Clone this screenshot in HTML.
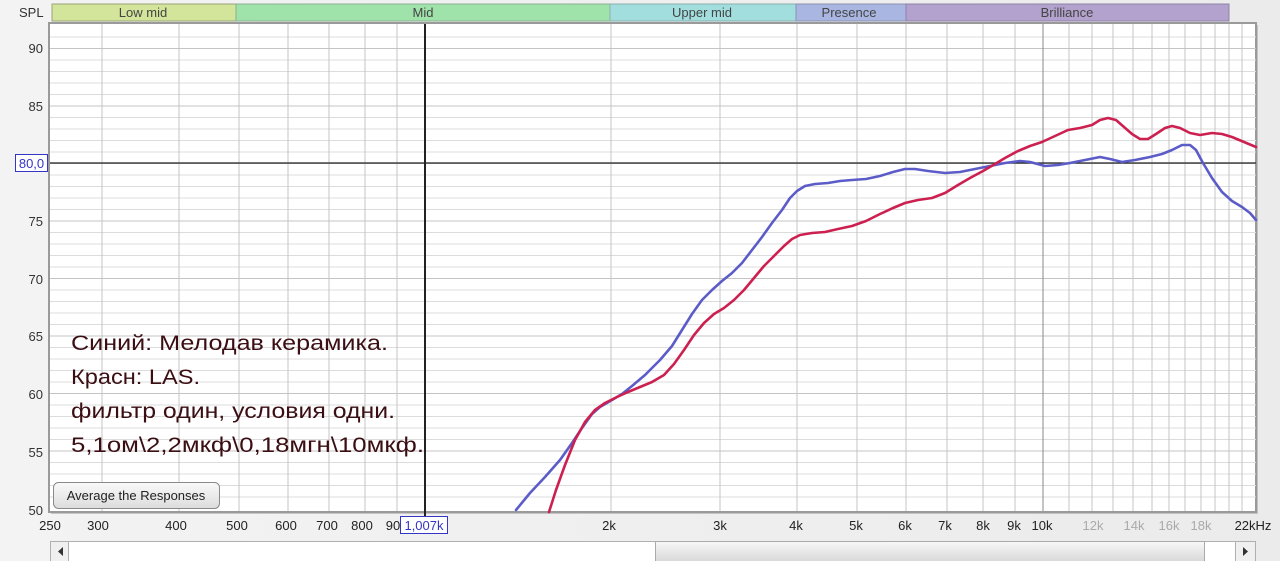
<!DOCTYPE html>
<html><head><meta charset="utf-8"><style>
html,body{margin:0;padding:0;width:1280px;height:561px;overflow:hidden;background:#efefef;}
svg{display:block}
</style></head><body>
<svg width="1280" height="561" viewBox="0 0 1280 561" xmlns="http://www.w3.org/2000/svg" font-family="Liberation Sans, sans-serif">
<defs>
<linearGradient id="bg" x1="0" y1="0" x2="1" y2="0"><stop offset="0" stop-color="#f3f3f3"/><stop offset="1" stop-color="#ebebeb"/></linearGradient>
<linearGradient id="sb" x1="0" y1="0" x2="0" y2="1"><stop offset="0" stop-color="#f8f8f8"/><stop offset="1" stop-color="#d8d8d8"/></linearGradient>
<linearGradient id="btn" x1="0" y1="0" x2="0" y2="1"><stop offset="0" stop-color="#fafafa"/><stop offset="1" stop-color="#dcdcdc"/></linearGradient>
</defs>
<rect width="1280" height="561" fill="url(#bg)"/>
<!-- bands -->
<g font-size="13" fill="#444" text-anchor="middle">
<rect x="52" y="4" width="184" height="17" fill="#d3e59b" stroke="#9aa47a"/><text x="143" y="17">Low mid</text>
<rect x="236" y="4" width="374" height="17" fill="#9fe3aa" stroke="#8ab092"/><text x="423" y="17">Mid</text>
<rect x="610" y="4" width="186" height="17" fill="#a2dede" stroke="#8ab0b0"/><text x="702" y="17">Upper mid</text>
<rect x="796" y="4" width="110" height="17" fill="#a9b6e2" stroke="#8a92b0"/><text x="849" y="17">Presence</text>
<rect x="906" y="4" width="323" height="17" fill="#b2a2cd" stroke="#8f82a6"/><text x="1067" y="17">Brilliance</text>
</g>
<text x="19" y="17" font-size="13" fill="#333">SPL</text>
<!-- plot -->
<rect x="51" y="25" width="1207" height="489" fill="#999" opacity="0.5"/>
<rect x="49" y="23" width="1207" height="489" fill="#fff" stroke="#9a9a9a" stroke-width="2"/>
<g stroke="#dcdcdc" stroke-width="1">
<path d="M50 37H1256M50 60H1256M50 71.5H1256M50 83H1256M50 94.5H1256M50 117.5H1256M50 129H1256M50 140.5H1256M50 152H1256M50 175H1256M50 186.5H1256M50 198H1256M50 209.5H1256M50 232.5H1256M50 244H1256M50 255.5H1256M50 267H1256M50 290H1256M50 301.5H1256M50 313H1256M50 324.5H1256M50 347.5H1256M50 359H1256M50 370.5H1256M50 382H1256M50 405H1256M50 416.5H1256M50 428H1256M50 439.5H1256M50 462.5H1256M50 474H1256M50 485.5H1256M50 497H1256"/>
</g>
<g stroke="#c4c4c4" stroke-width="1">
<path d="M50 48.5H1256M50 106H1256M50 163.5H1256M50 221H1256M50 278.5H1256M50 336H1256M50 393.5H1256M50 451H1256"/>
<path d="M102 24V511M179 24V511M239 24V511M288 24V511M329 24V511M365 24V511M397 24V511M611 24V511M720 24V511M797 24V511M857 24V511M906 24V511M947 24V511M983 24V511M1015 24V511M1069 24V511M1092 24V511M1113 24V511M1133 24V511M1152 24V511M1169 24V511M1185 24V511M1201 24V511M1215 24V511M1229 24V511M1242 24V511"/>
</g>
<path d="M1043 24V511" stroke="#888" stroke-width="1"/>
<path d="M50 163H1256" stroke="#222" stroke-width="1.3"/>
<path d="M425 24V516" stroke="#222" stroke-width="2"/>
<!-- curves -->
<g fill="none" stroke-width="2.6" stroke-linejoin="round" stroke-linecap="round">
<polyline stroke="#5c5cc8" points="516,510 530,493 545,477 560,460 572,443 582,428 592,414 600,407 612,400 622,394 632,386 645,375 660,360 672,346 682,330 692,314 702,300 712,290 722,281 732,273 742,263 752,250 762,237 772,223 782,210 790,198 797,191 805,186 815,184 828,183 840,181 852,180 866,179 880,176 893,172 905,169 915,169 928,171 945,173 960,172 975,169 990,166 1005,163 1020,161 1030,162 1045,166 1058,165 1070,163 1085,160 1100,157 1110,159 1122,162 1135,160 1150,157 1162,154 1172,150 1182,145 1190,145 1196,150 1203,163 1212,178 1222,192 1232,201 1242,207 1250,213 1256,220"/>
<polyline stroke="#cc2050" points="549,512 556,490 565,465 575,440 585,422 595,410 605,403 617,397 628,392 640,387 652,382 664,375 674,364 684,350 694,335 704,323 714,314 724,308 734,300 744,290 754,278 764,266 774,256 784,246 792,239 800,235 812,233 825,232 838,229 852,226 866,221 880,214 893,208 905,203 918,200 932,198 945,193 958,185 970,178 983,171 995,164 1005,158 1018,151 1030,146 1042,142 1055,136 1068,130 1080,128 1092,125 1100,120 1108,118 1116,120 1124,127 1132,134 1140,139 1148,139 1156,134 1165,128 1172,126 1180,128 1190,133 1200,135 1212,133 1222,134 1232,137 1244,142 1256,147"/>
</g>
<!-- annotation -->
<g font-size="21" fill="#3a0e12">
<text x="71" y="350" textLength="317" lengthAdjust="spacingAndGlyphs">Синий: Мелодав керамика.</text>
<text x="71" y="384" textLength="129" lengthAdjust="spacingAndGlyphs">Красн: LAS.</text>
<text x="71" y="418" textLength="324" lengthAdjust="spacingAndGlyphs">фильтр один, условия одни.</text>
<text x="71" y="452" textLength="353" lengthAdjust="spacingAndGlyphs">5,1ом\2,2мкф\0,18мгн\10мкф.</text>
</g>
<!-- button -->
<rect x="53.5" y="482.5" width="166" height="26" rx="5" fill="url(#btn)" stroke="#8a8a8a"/>
<text x="136" y="500" font-size="13" fill="#222" text-anchor="middle">Average the Responses</text>
<!-- y labels -->
<g font-size="13" fill="#333" text-anchor="end">
<text x="43" y="53">90</text><text x="43" y="111">85</text><text x="43" y="226">75</text><text x="43" y="284">70</text><text x="43" y="341">65</text><text x="43" y="399">60</text><text x="43" y="457">55</text><text x="43" y="515">50</text>
</g>
<rect x="15.5" y="154.5" width="32" height="17" fill="#fff" stroke="#3535c8"/>
<text x="31.5" y="168" font-size="13" fill="#3535c8" text-anchor="middle">80,0</text>
<!-- x labels -->
<g font-size="13" fill="#222" text-anchor="middle">
<text x="50" y="530">250</text><text x="98" y="530">300</text><text x="176" y="530">400</text><text x="237" y="530">500</text><text x="286" y="530">600</text><text x="327" y="530">700</text><text x="362" y="530">800</text><text x="393" y="530">90</text>
<text x="609" y="530">2k</text><text x="720" y="530">3k</text><text x="796" y="530">4k</text><text x="856" y="530">5k</text><text x="905" y="530">6k</text><text x="945" y="530">7k</text><text x="983" y="530">8k</text><text x="1014" y="530">9k</text><text x="1042" y="530">10k</text>
<g fill="#aaa"><text x="1093" y="530">12k</text><text x="1134" y="530">14k</text><text x="1169" y="530">16k</text><text x="1201" y="530">18k</text></g>
<text x="1253" y="530">22kHz</text>
</g>
<rect x="400.5" y="516.5" width="47" height="17" fill="#fff" stroke="#3535c8"/>
<text x="424" y="530" font-size="13" fill="#3535c8" text-anchor="middle">1,007k</text>
<!-- scrollbar -->
<rect x="50.5" y="541.5" width="1205" height="20" fill="#fff" stroke="#b0b0b0"/>
<rect x="50.5" y="541.5" width="18" height="20" fill="#f0f0f0" stroke="#b0b0b0"/>
<path d="M63 547V556L58 551.5Z" fill="#333"/>
<rect x="655.5" y="541.5" width="549" height="20" fill="url(#sb)" stroke="#aaa"/>
<rect x="1235.5" y="541.5" width="20" height="20" fill="#f0f0f0" stroke="#b0b0b0"/>
<path d="M1243 547V556L1248 551.5Z" fill="#333"/>
</svg>
</body></html>
